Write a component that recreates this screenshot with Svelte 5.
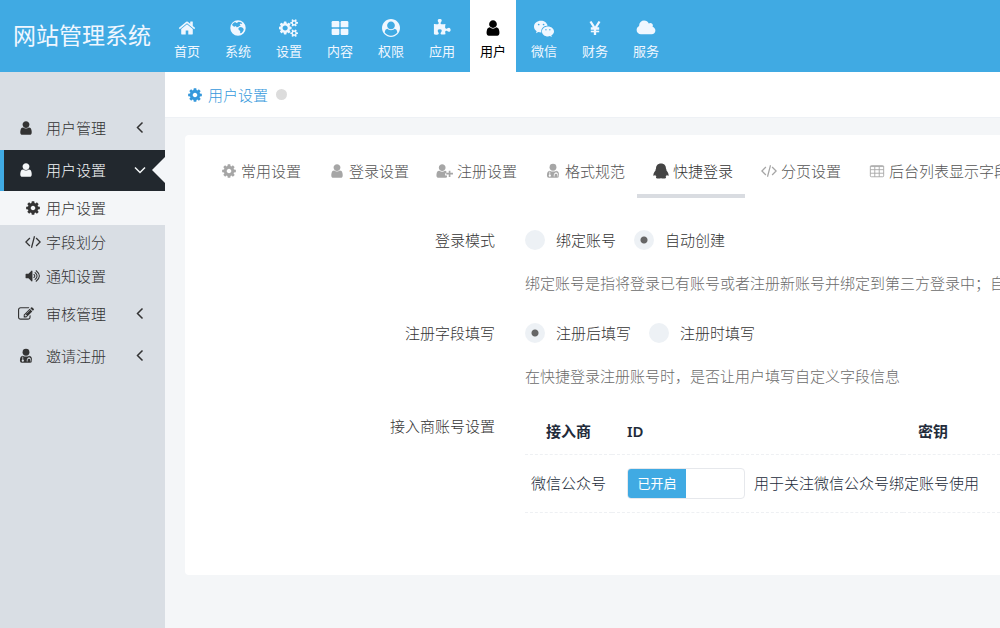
<script lang="ts">
    const userPath =
        'M1536 1399q0 109-62.5 187t-150.5 78h-854q-88 0-150.5-78t-62.5-187q0-85 8.5-160.5t31.5-152 58.5-131 94-89 134.5-34.5q131 128 313 128t313-128q76 0 134.5 34.5t94 89 58.5 131 31.5 152 8.5 160.5zm-256-887q0 159-112.5 271.5t-271.5 112.5-271.5-112.5-112.5-271.5 112.5-271.5 271.5-112.5 271.5 112.5 112.5 271.5z';

    const topNav = [
        { icon: 'home', label: '首页' },
        { icon: 'globe', label: '系统' },
        { icon: 'cogs', label: '设置' },
        { icon: 'grid', label: '内容' },
        { icon: 'circle-user', label: '权限' },
        { icon: 'puzzle', label: '应用' },
        { icon: 'user', label: '用户' },
        { icon: 'wechat', label: '微信' },
        { icon: 'yen', label: '财务' },
        { icon: 'cloud', label: '服务' },
    ];
    const menu = [
        { icon: 'user', label: '用户管理' },
        {
            icon: 'user',
            label: '用户设置',
            children: [
                { icon: 'cog', label: '用户设置' },
                { icon: 'code', label: '字段划分' },
                { icon: 'volume', label: '通知设置' },
            ],
        },
        { icon: 'edit', label: '审核管理' },
        { icon: 'user-md', label: '邀请注册' },
    ];
    const tabs = [
        { icon: 'cog', label: '常用设置' },
        { icon: 'user', label: '登录设置' },
        { icon: 'user-plus', label: '注册设置' },
        { icon: 'user-md', label: '格式规范' },
        { icon: 'qq', label: '快捷登录' },
        { icon: 'code', label: '分页设置' },
        { icon: 'table', label: '后台列表显示字段' },
    ];

    let activeNav = $state('用户');
    let openMenu = $state('用户设置');
    let activeSub = $state('用户设置');
    let activeTab = $state('快捷登录');
    let loginMode = $state('create');
    let fillMode = $state('after');
    let wechatOn = $state(true);
</script>

{#snippet icon(name: string)}
    {#if name === 'home'}
        <svg class="icon" viewBox="0 0 1792 1792" aria-hidden="true"><path d="M1472 992v480q0 26-19 45t-45 19h-384v-384h-256v384h-384q-26 0-45-19t-19-45v-480q0-1 .5-3t.5-3l575-474 575 474q1 2 1 6zm223-69l-62 74q-8 9-21 11h-3q-13 0-21-7l-692-577-692 577q-12 8-24 7-13-2-21-11l-62-74q-8-10-7-23.5t11-21.5l719-599q32-26 76-26t76 26l244 204v-195q0-14 9-23t23-9h192q14 0 23 9t9 23v408l219 182q10 8 11 21.5t-7 23.500z" /></svg>
    {:else if name === 'globe'}
        <svg class="icon" viewBox="0 0 1792 1792" aria-hidden="true">
            <path fill-rule="evenodd" d="M896 128a768 768 0 1 0 0 1536a768 768 0 1 0 0-1536zM960 270L1190 330L1320 420L1230 500L1130 440L1060 560L1180 640L1030 700L900 800L740 830L700 700L520 760L390 690L300 560Q420 370 600 300L760 390L860 350zM990 850L1190 800L1400 900L1470 1060Q1400 1260 1240 1390L1110 1430L1120 1200L980 1090L930 960z" />
        </svg>
    {:else if name === 'cogs'}
        <svg class="icon" viewBox="0 0 1920 1792" aria-hidden="true"><path d="M832 896q0-106-75-181t-181-75-181 75-75 181 75 181 181 75 181-75 75-181zm768 512q0-52-38-90t-90-38-90 38-38 90q0 53 37.500 90.500t90.500 37.500 90.500-37.500 37.500-90.500zm0-1024q0-52-38-90t-90-38-90 38-38 90q0 53 37.500 90.500t90.500 37.500 90.500-37.500 37.500-90.500zm-384 421v185q0 10-7 19.500t-16 10.500l-155 24q-11 35-32 76 34 48 90 115 7 11 7 20 0 12-7 19-23 30-82.500 89.500t-78.500 59.500q-11 0-21-7l-115-90q-37 19-77 31-11 108-23 155-7 24-30 24h-186q-11 0-20-7.500t-10-17.500l-23-153q-34-10-75-31l-118 89q-7 7-20 7-11 0-21-8-144-133-144-160 0-9 7-19 10-14 41-53t47-61q-23-44-35-82l-152-24q-10-1-17-9.500t-7-19.500v-185q0-10 7-19.500t16-10.500l155-24q11-35 32-76-34-48-90-115-7-11-7-20 0-12 7-20 22-30 82-89t79-59q11 0 21 7l115 90q34-18 77-32 11-108 23-154 7-24 30-24h186q11 0 20 7.500t10 17.500l23 153q34 10 75 31l118-89q8-7 20-7 11 0 21 8 144 133 144 160 0 8-7 19-12 16-42 54t-45 60q23 48 34 82l152 23q10 2 17 10.500t7 19.500zm640 533v140q0 16-149 31-12 27-30 52 51 113 51 138 0 4-4 7-122 71-124 71-8 0-46-47t-52-68q-20 2-30 2t-30-2q-14 21-52 68t-46 47q-2 0-124-71-4-3-4-7 0-25 51-138-18-25-30-52-149-15-149-31v-140q0-16 149-31 13-29 30-52-51-113-51-138 0-4 4-7 4-2 35-20t59-34 30-16q8 0 46 46.500t52 67.500q20-2 30-2t30 2q51-71 92-112l6-2q4 0 124 70 4 3 4 7 0 25-51 138 17 23 30 52 149 15 149 31zm0-1024v140q0 16-149 31-12 27-30 52 51 113 51 138 0 4-4 7-122 71-124 71-8 0-46-47t-52-68q-20 2-30 2t-30-2q-14 21-52 68t-46 47q-2 0-124-71-4-3-4-7 0-25 51-138-18-25-30-52-149-15-149-31v-140q0-16 149-31 13-29 30-52-51-113-51-138 0-4 4-7 4-2 35-20t59-34 30-16q8 0 46 46.500t52 67.500q20-2 30-2t30 2q51-71 92-112l6-2q4 0 124 70 4 3 4 7 0 25-51 138 17 23 30 52 149 15 149 31z" /></svg>
    {:else if name === 'grid'}
        <svg class="icon" viewBox="0 0 1792 1792" aria-hidden="true">
            <rect x="64" y="192" width="768" height="640" rx="120" />
            <rect x="960" y="192" width="768" height="640" rx="120" />
            <rect x="64" y="960" width="768" height="640" rx="120" />
            <rect x="960" y="960" width="768" height="640" rx="120" />
        </svg>
    {:else if name === 'circle-user'}
        <svg class="icon" viewBox="0 0 1792 1792" aria-hidden="true"><path d="M1523 1339q-22-155-87.500-257.500t-184.500-118.500q-67 74-159.500 115.500t-195.500 41.500-195.500-41.500-159.500-115.500q-119 16-184.500 118.500t-87.500 257.500q106 150 271 237.500t356 87.500 356-87.500 271-237.500zm-243-699q0-159-112.500-271.500t-271.500-112.500-271.500 112.500-112.500 271.500 112.500 271.500 271.500 112.500 271.500-112.500 112.500-271.500zm512 256q0 182-71 347.500t-190.500 286-285.500 191.500-349 71q-182 0-348-71t-286-191-191-286-71-348 71-348 191-286 286-191 348-71 348 71 286 191 191 286 71 348z" /></svg>
    {:else if name === 'puzzle'}
        <svg class="icon" viewBox="0 0 1792 1792" aria-hidden="true"><path d="M1755 1083q0 81-44.500 135t-123.500 54q-41 0-77.500-17.500t-59-38-56.500-38-71-17.500q-110 0-110 124 0 39 16 115t15 115v5q-22 0-33 1-34 3-97.500 11.500t-115.500 13.500-98 5q-61 0-103-26.500t-42-83.500q0-37 17.500-71t38-56.500 38-59 17.500-77.500q0-79-54-123.500t-135-44.500q-84 0-143 45.500t-59 127.500q0 43 15 83t33.500 64.500 33.500 53 15 50.500q0 45-46 89-37 35-117 35-95 0-245-24-9-2-27.500-4t-27.500-4l-13-2q-1 0-3-1-2 0-2-1v-1024q2 1 17.500 3.500t34 5 21.500 3.500q150 24 245 24 80 0 117-35 46-44 46-89 0-22-15-50.500t-33.500-53-33.500-64.500-15-83q0-82 59-127.500t144-45.500q80 0 134 44.500t54 123.500q0 41-17.500 77.500t-38 59-38 56.500-17.500 71q0 57 42 83.500t103 26.500q64 0 180-15t163-17v2q-1 2-3.500 17.500t-5 34-3.500 21.500q-24 150-24 245 0 80 35 117 44 46 89 46 22 0 50.500-15t53-33.500 64.500-33.500 83-15q82 0 127.500 59t45.500 143z" /></svg>
    {:else if name === 'user'}
        <svg class="icon" viewBox="0 0 1792 1792" aria-hidden="true"><path d={userPath} /></svg>
    {:else if name === 'user-plus'}
        <svg class="icon" viewBox="0 0 2048 1792" aria-hidden="true">
            <path d="M704 896q-159 0-271.500-112.500t-112.500-271.500 112.500-271.500 271.500-112.500 271.500 112.500 112.500 271.500-112.500 271.500-271.500 112.500zM1250 1408v200q-50 56-150 56h-796q-118 0-186-68t-68-190q0-160 40-310t130-200 180-35q130 120 304 120t304-120q100-12 172 50v240h-80q-60 0-60 60v137q0 60 60 60z" />
            <path d="M1450 860h190v240h290v190h-290v290h-190v-290h-290v-190h290z" />
        </svg>
    {:else if name === 'user-md'}
        <svg class="icon" viewBox="0 0 1792 1792" aria-hidden="true">
            <circle cx="896" cy="480" r="384" />
            <path fill-rule="evenodd" d="M540 860q356 200 712 0 324 30 324 540 0 264-214 264h-932q-214 0-214-264 0-510 324-540zM500 960v340a120 120 0 1 0 80 0v-320zM1190 970v130q-210 30-210 250v150h90v-150q0-160 165-160t165 160v150h90v-150q0-220-210-250v-130z" />
        </svg>
    {:else if name === 'wechat'}
        <svg class="icon" viewBox="0 0 2048 1792" aria-hidden="true">
            <path fill-rule="evenodd" d="M720 160C310 160 0 420 0 760c0 195 100 350 270 465l-68 205 238-120q145 35 280 35h38C690 970 960 660 1345 660h45C1330 360 1040 160 720 160zM480 450a88 88 0 1 1 0 176a88 88 0 1 1 0-176zM980 450a88 88 0 1 1 0 176a88 88 0 1 1 0-176z" />
            <path fill-rule="evenodd" d="M1430 730c-345 0-615 235-615 515s270 510 615 510q100 0 205-32l187 102-52-170c150-112 278-240 278-410 0-280-290-515-618-515zM1225 1010a70 70 0 1 1 0 140a70 70 0 1 1 0-140zM1625 1010a70 70 0 1 1 0 140a70 70 0 1 1 0-140z" />
        </svg>
    {:else if name === 'yen'}
        <svg class="icon line" viewBox="0 0 18 18" aria-hidden="true"><path stroke-width="2.300" d="M4.500 2.500L9 9.500L13.500 2.500M9 9v7M4.800 9.500h8.400" /><path stroke-width="1.600" d="M4.800 12.500h8.400" /></svg>
    {:else if name === 'cloud'}
        <svg class="icon" viewBox="0 0 2048 1792" aria-hidden="true"><path d="M1984 1152q0 159-112.500 271.500t-271.500 112.500h-1088q-185 0-316.500-131.500t-131.500-316.500q0-132 71-241.500t187-163.500q-2-28-2-43 0-212 150-362t362-150q158 0 286.500 88t187.500 230q70-62 166-62 106 0 181 75t75 181q0 75-41 138 129 30 213 134.500t84 239.500z" /></svg>
    {:else if name === 'cog'}
        <svg class="icon" viewBox="0 0 1792 1792" aria-hidden="true"><path d="M1152 896q0-106-75-181t-181-75-181 75-75 181 75 181 181 75 181-75 75-181zm512-109v222q0 12-8 23t-20 13l-185 28q-19 54-39 91 35 50 107 138 10 12 10 25t-9 23q-27 37-99 108t-94 71q-12 0-26-9l-138-108q-44 23-91 38-16 136-29 186-7 28-36 28h-222q-14 0-24.500-8.500t-11.500-21.500l-28-184q-49-16-90-37l-141 107q-10 9-25 9-14 0-25-11-126-114-165-168-7-10-7-23 0-12 8-23 15-21 51-66.500t54-70.500q-27-50-41-99l-183-27q-13-2-21-12.500t-8-23.500v-222q0-12 8-23t19-13l186-28q14-46 39-92-40-57-107-138-10-12-10-24 0-10 9-23 26-36 98.500-107.500t94.500-71.500q13 0 26 10l138 107q44-23 91-38 16-136 29-186 7-28 36-28h222q14 0 24.500 8.500t11.500 21.500l28 184q49 16 90 37l142-107q9-9 24-9 13 0 25 10 129 119 165 170 7 8 7 22 0 12-8 23-15 21-51 66.500t-54 70.500q26 50 41 98l183 28q13 2 21 12.500t8 23.500z" /></svg>
    {:else if name === 'code'}
        <svg class="icon line" viewBox="0 0 18 18" aria-hidden="true"><path stroke-width="1.400" d="M5.500 4.500L1 9L5.500 13.500M12.500 4.500L17 9L12.500 13.500M10.700 2.500L7.300 15.500" /></svg>
    {:else if name === 'volume'}
        <svg class="icon" viewBox="0 0 1792 1792" aria-hidden="true">
            <path d="M832 352v1088q0 26-19 45t-45 19-45-19l-333-333h-262q-26 0-45-19t-19-45v-384q0-26 19-45t45-19h262l333-333q19-19 45-19t45 19 19 45z" />
            <path fill="none" stroke="currentColor" stroke-width="120" stroke-linecap="round" d="M1000 730q200 166 0 332M1130 520q440 376 0 752M1250 310q720 586 0 1172" />
        </svg>
    {:else if name === 'edit'}
        <svg class="icon" viewBox="0 0 1792 1792" aria-hidden="true"><path d="M888 1184l116-116-152-152-116 116v56h96v96h56zm440-720q-16-16-33 1l-350 350q-17 17-1 33t33-1l350-350q17-17 1-33zm80 594v190q0 119-84.500 203.500t-203.500 84.500h-832q-119 0-203.500-84.500t-84.500-203.500v-832q0-119 84.500-203.500t203.500-84.500h832q63 0 117 25 15 7 18 23 3 17-9 29l-49 49q-14 14-32 8-23-6-45-6h-832q-66 0-113 47t-47 113v832q0 66 47 113t113 47h832q66 0 113-47t47-113v-126q0-13 9-22l64-64q15-15 35-7t20 29zm-96-738l288 288-672 672h-288v-288zm444 132l-92 92-288-288 92-92q28-28 68-28t68 28l152 152q28 28 28 68t-28 68z" /></svg>
    {:else if name === 'qq'}
        <svg class="icon" viewBox="0 0 18 18" aria-hidden="true"><path d="M9 .5C5.200.5 3.400 3 3.400 6.300C3 7 2.700 7.600 2.800 8.300C1.300 10 .2 12 .5 14.200C.9 15 1.700 14 2.400 13.200C2.700 14.200 3.300 14.900 3.900 15.500C2.900 16 3.100 17.400 5 17.400H8C8.600 17 9.400 17 10 17.400H13C14.900 17.400 15.100 16 14.100 15.500C14.700 14.900 15.300 14.200 15.600 13.200C16.300 14 17.100 15 17.500 14.200C17.800 12 16.700 10 15.200 8.300C15.300 7.600 15 7 14.600 6.300C14.600 3 12.800.5 9 .5z" /></svg>
    {:else if name === 'table'}
        <svg class="icon line" viewBox="0 0 18 18" aria-hidden="true"><rect x="1.500" y="3" width="15" height="12.500" rx="1" /><path d="M1.500 4h15M1.500 7.500h15M1.500 11.500h15M6.500 4v11.500M11.500 4v11.500" /></svg>
    {:else if name === 'left'}
        <svg class="icon line" viewBox="0 0 18 18" aria-hidden="true"><path stroke-width="1.800" d="M12 3L6 9L12 15" /></svg>
    {:else if name === 'down'}
        <svg class="icon line" viewBox="0 0 18 18" aria-hidden="true"><path stroke-width="1.800" d="M3 6.500L9 12.500L15 6.500" /></svg>
    {/if}
{/snippet}

<div class="page">
    <header class="topbar">
        <a class="logo" href="#home">网站管理系统</a>
        <nav class="top-nav">
            {#each topNav as item}
                <a
                    href="#{item.icon}"
                    class={['top-link', { active: item.label === activeNav }]}
                    onclick={() => (activeNav = item.label)}
                >
                    {@render icon(item.icon)}
                    <span>{item.label}</span>
                </a>
            {/each}
        </nav>
    </header>

    <div class="body">
        <aside class="sidebar">
            <ul class="menu">
                {#each menu as item}
                    <li>
                        <button
                            class={['menu-item', { active: item.label === openMenu }]}
                            onclick={() => (openMenu = item.label)}
                        >
                            {@render icon(item.icon)}
                            <span class="menu-label">{item.label}</span>
                            <span class="arrow">{@render icon(item.label === openMenu ? 'down' : 'left')}</span>
                        </button>
                        {#if item.children && item.label === openMenu}
                            <ul class="submenu">
                                {#each item.children as sub}
                                    <li>
                                        <a
                                            href="#{sub.icon}"
                                            class={['sub-item', { current: sub.label === activeSub }]}
                                            onclick={() => (activeSub = sub.label)}
                                        >
                                            {@render icon(sub.icon)}
                                            <span>{sub.label}</span>
                                        </a>
                                    </li>
                                {/each}
                            </ul>
                        {/if}
                    </li>
                {/each}
            </ul>
        </aside>

        <main class="content">
            <div class="crumbs">
                <a href="#cog">{@render icon('cog')}<span>用户设置</span></a>
                <i class="dot"></i>
            </div>

            <section class="panel">
                <div class="tabs" role="tablist">
                    {#each tabs as tab}
                        <button
                            role="tab"
                            aria-selected={tab.label === activeTab}
                            class={['tab', { active: tab.label === activeTab }]}
                            onclick={() => (activeTab = tab.label)}
                        >
                            {@render icon(tab.icon)}
                            <span>{tab.label}</span>
                        </button>
                    {/each}
                </div>

                <form class="form">
                    <div class="form-row">
                        <div class="form-label" id="login-mode">登录模式</div>
                        <div class="field">
                            <div class="radios" role="radiogroup" aria-labelledby="login-mode">
                                <label><input type="radio" name="login" value="bind" bind:group={loginMode} />绑定账号</label>
                                <label><input type="radio" name="login" value="create" bind:group={loginMode} />自动创建</label>
                            </div>
                            <p class="help">绑定账号是指将登录已有账号或者注册新账号并绑定到第三方登录中；自动</p>
                        </div>
                    </div>
                    <div class="form-row">
                        <div class="form-label" id="fill-mode">注册字段填写</div>
                        <div class="field">
                            <div class="radios" role="radiogroup" aria-labelledby="fill-mode">
                                <label><input type="radio" name="fill" value="after" bind:group={fillMode} />注册后填写</label>
                                <label><input type="radio" name="fill" value="during" bind:group={fillMode} />注册时填写</label>
                            </div>
                            <p class="help">在快捷登录注册账号时，是否让用户填写自定义字段信息</p>
                        </div>
                    </div>
                    <div class="form-row">
                        <div class="form-label">接入商账号设置</div>
                        <div class="field">
                            <table>
                                <thead>
                                    <tr>
                                        <th class="vendor">接入商</th>
                                        <th class="app-id">ID</th>
                                        <th>密钥</th>
                                    </tr>
                                </thead>
                                <tbody>
                                    <tr>
                                        <td class="vendor">微信公众号</td>
                                        <td colspan="2">
                                            <div class="switch-line">
                                                <label class="switch">
                                                    <input type="checkbox" aria-label="微信公众号" bind:checked={wechatOn} />
                                                    <span class={['handle', { off: !wechatOn }]}>{wechatOn ? '已开启' : '已关闭'}</span>
                                                </label>
                                                <span>用于关注微信公众号绑定账号使用</span>
                                            </div>
                                        </td>
                                    </tr>
                                </tbody>
                            </table>
                        </div>
                    </div>
                </form>
            </section>
        </main>
    </div>
</div>

<style>
    :global(body) {
        margin: 0;
        background: #f4f6f8;
    }
    .page {
        --blue: #40aae3;
        display: flex;
        flex-direction: column;
        min-height: 100vh;
        overflow: hidden;
        color: #333;
        font-family: 'Noto Sans', 'Noto Sans CJK SC', sans-serif;
        font-size: 15px;
        font-weight: 300;
        line-height: 20px;
    }
    .page * {
        box-sizing: border-box;
    }
    a {
        color: inherit;
        text-decoration: none;
    }
    button {
        border: 0;
        background: none;
        color: inherit;
        font: inherit;
        cursor: pointer;
    }
    ul {
        margin: 0;
        padding: 0;
        list-style: none;
    }
    .icon {
        display: block;
        flex: none;
        width: 18px;
        height: 16px;
        fill: currentColor;
    }
    .icon.line {
        fill: none;
        stroke: currentColor;
    }

    .topbar {
        display: flex;
        height: 72px;
        background: var(--blue);
        color: #f0f7ff;
    }
    .logo {
        flex: none;
        width: 164px;
        padding-left: 13px;
        font-size: 23px;
        font-weight: 400;
        line-height: 70px;
    }
    .top-nav {
        display: flex;
        gap: 5px;
    }
    .top-link {
        display: flex;
        flex-direction: column;
        align-items: center;
        gap: 4px;
        width: 46px;
        padding-top: 19px;
        font-size: 13px;
        font-weight: 400;
    }
    .top-link .icon {
        width: 20px;
        height: 18px;
    }
    .top-link.active {
        background: #fff;
        color: #000;
    }

    .body {
        display: flex;
        flex: 1;
    }
    .sidebar {
        flex: none;
        width: 165px;
        padding-top: 36px;
        background: #d9dee4;
    }
    .menu {
        display: flex;
        flex-direction: column;
        gap: 1px;
    }
    .menu-item {
        position: relative;
        display: flex;
        align-items: center;
        width: 100%;
        height: 41px;
        padding: 0 16px 2px 13px;
        border-left: 4px solid transparent;
        text-align: left;
    }
    .menu-label {
        flex: 1;
        padding-left: 11px;
    }
    .arrow .icon {
        height: 15px;
    }
    .menu-item.active {
        border-color: var(--blue);
        background: #22282e;
        color: #f4f6f8;
    }
    .menu-item.active::after {
        content: '';
        position: absolute;
        top: 7px;
        right: 0;
        border: 13px solid transparent;
        border-left: 0;
        border-right-color: #f4f6f8;
    }
    .sub-item {
        display: flex;
        align-items: center;
        gap: 4px;
        height: 34px;
        padding-left: 24px;
    }
    .sub-item.current {
        background: #f4f6f8;
    }

    .content {
        flex: 1;
        min-width: 0;
    }
    .crumbs {
        display: flex;
        align-items: center;
        gap: 8px;
        height: 46px;
        padding-left: 21px;
        border-bottom: 1px solid #eef1f5;
        background: #fff;
    }
    .crumbs a {
        display: flex;
        align-items: center;
        gap: 4px;
        color: #3598dc;
    }
    .dot {
        width: 11px;
        height: 11px;
        border-radius: 50%;
        background: #dcdcdc;
    }

    .panel {
        margin: 17px 0 52px 20px;
        padding: 20px 0 62px 20px;
        border-radius: 4px 0 0 4px;
        background: #fff;
        overflow: hidden;
    }
    .tabs {
        display: flex;
        color: #555;
    }
    .tab {
        display: flex;
        flex: none;
        align-items: center;
        gap: 3px;
        height: 43px;
        padding: 0 12px 8px 15px;
        border-bottom: 4px solid transparent;
    }
    .tab .icon {
        color: #a6a6a6;
    }
    .tab.active {
        border-color: #d9dce1;
        color: #333;
    }
    .tab.active .icon {
        color: #444;
    }

    .form {
        display: flex;
        flex-direction: column;
        gap: 30px;
        padding-top: 32px;
    }
    .form-row {
        display: flex;
        gap: 30px;
    }
    .form-label {
        flex: none;
        width: 290px;
        text-align: right;
    }
    .field {
        flex: 1;
        min-width: 0;
    }
    .radios {
        display: flex;
        gap: 18px;
    }
    .radios label {
        display: flex;
        gap: 11px;
    }
    .radios input {
        appearance: none;
        width: 20px;
        height: 20px;
        margin: 0;
        border-radius: 50%;
        background: #edf1f5;
    }
    .radios input:checked {
        background: radial-gradient(circle, #666 3px, #edf1f5 4px);
    }
    .help {
        margin: 23px 0 0;
        color: #6b6b6b;
        white-space: nowrap;
    }

    table {
        width: 100%;
        border-collapse: collapse;
        table-layout: fixed;
        color: #222b3a;
        white-space: nowrap;
    }
    th,
    td {
        height: 58px;
        padding: 0 0 0 15px;
        border-bottom: 1px dashed #eef0f3;
        text-align: left;
    }
    th {
        height: 38px;
        padding-bottom: 8px;
        font-weight: 600;
    }
    .vendor {
        width: 87px;
        padding-left: 0;
        text-align: center;
    }
    .app-id {
        width: 291px;
    }
    .switch-line {
        display: flex;
        align-items: center;
        gap: 9px;
    }
    .switch {
        position: relative;
        display: flex;
        width: 118px;
        height: 31px;
        border: 1px solid #e6e8ec;
        border-radius: 4px;
        overflow: hidden;
        cursor: pointer;
    }
    .switch input {
        position: absolute;
        opacity: 0;
    }
    .handle {
        width: 50%;
        background: var(--blue);
        color: #fff;
        font-size: 13px;
        font-weight: 400;
        line-height: 29px;
        text-align: center;
    }
    .handle.off {
        margin-left: auto;
        background: #e6e8ec;
        color: #333;
    }
</style>
